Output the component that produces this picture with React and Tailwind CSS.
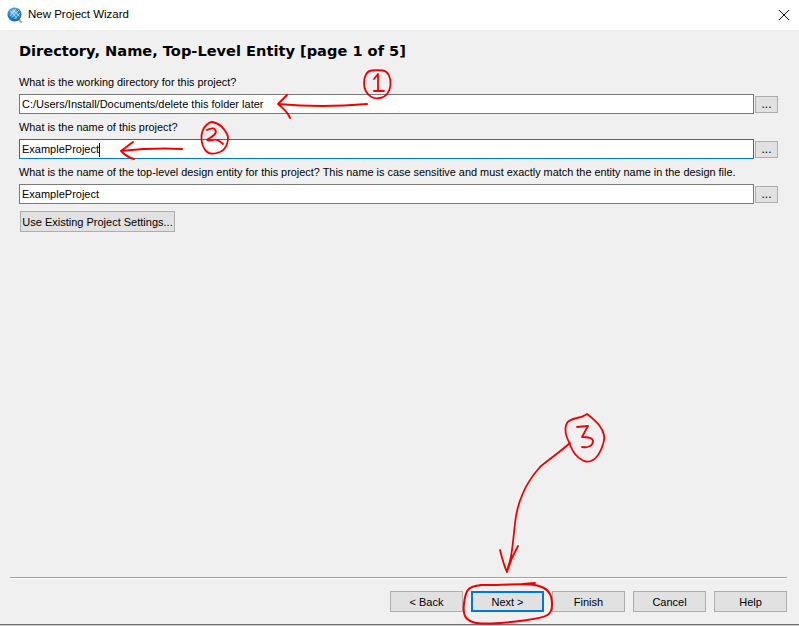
const labelCls = 'text-[10.9px] leading-[15px] text-black whitespace-nowrap'
const btnCls = 'bg-[#e1e1e1] border border-[#adadad] text-[11px] text-black flex items-center justify-center whitespace-nowrap'

// joins hand-drawn points with midpoint quadratics so the scribbles don't look angular
const smooth = (pts) => {
  let d = `M${pts[0][0]} ${pts[0][1]}`
  for (let i = 1; i < pts.length - 1; i++) {
    const mx = (pts[i][0] + pts[i + 1][0]) / 2
    const my = (pts[i][1] + pts[i + 1][1]) / 2
    d += ` Q${pts[i][0]} ${pts[i][1]} ${mx} ${my}`
  }
  const last = pts[pts.length - 1]
  return d + ` L${last[0]} ${last[1]}`
}

const ring1 = [[371,70.5],[378,70],[387,71],[391,80],[390,90],[385,97],[375,99],[368,95],[364,88],[364,78],[368,71],[373,70.5]]
const ring2 = [[212,122],[218,123],[225,130],[229,138],[225,150],[215,154],[207,153],[202,145],[201,135],[204,127],[210,122],[213,122]]
const ring3 = [[587,414],[595,420],[603,430],[605,440],[598,457],[588,463],[578,458],[572,450],[569,442],[565,433],[566,423],[572,419],[582,417],[587,414]]
const ringNext = [[482,585],[470,586],[465,595],[463,612],[467,620],[478,624],[505,623],[543,618],[552,612],[552,598],[548,590],[538,585],[523,584],[495,585],[480,585]]

function PathRow({ value, focused, caret }) {
  return (
    <div className="flex items-center gap-px h-5">
      <div className={`flex-1 h-5 bg-white border flex items-center pl-[2px] pt-px text-[11px] text-black whitespace-nowrap ${focused ? 'border-[#0078d7]' : 'border-[#7a7a7a]'}`}>
        {value}
        {caret && <span className="w-px h-[14px] bg-black" />}
      </div>
      <div className={`${btnCls} w-[23px] h-[17px] pb-[1px] text-[12px]`}>...</div>
    </div>
  )
}

function WizardIcon() {
  return (
    <svg width="16" height="16" viewBox="0 0 16 16" className="shrink-0">
      <defs>
        <radialGradient id="glb" cx="0.4" cy="0.3" r="0.8">
          <stop offset="0" stopColor="#8cc6ea" />
          <stop offset="0.5" stopColor="#1f84cc" />
          <stop offset="1" stopColor="#125a96" />
        </radialGradient>
      </defs>
      <path d="M11 12 L14.5 15.5" stroke="#9aa4aa" strokeWidth="2" fill="none" />
      <circle cx="7.5" cy="7.5" r="7" fill="url(#glb)" />
      <path d="M3 9 L9 1.5 M5 10.5 L12 3 M7.5 12 L13 6 M3.5 4 L10 11.5 M6 2.5 L12.5 9.5" stroke="#e4f1f8" strokeWidth="0.7" fill="none" />
    </svg>
  )
}

function Scribbles() {
  return (
    <svg width="799" height="626" viewBox="0 0 799 626" fill="none" stroke="#f00000" strokeWidth="1.8" strokeLinecap="round" strokeLinejoin="round" className="absolute left-0 top-0 pointer-events-none">
      {/* 1 */}
      <path d={smooth(ring1)} />
      <path d="M374 79 L378 74 L378 90 M374 91 L384 91" />
      <path d="M367 104 C345 106 310 107 278 104 M287 95 L278 104 C283 108 288 112 290 118" strokeWidth="2" />
      {/* 2 */}
      <path d={smooth(ring2)} />
      <path d={smooth([[207,130],[213,127],[217,132],[212,137],[206,140],[210,141],[217,139],[223,144]])} />
      <path d="M182 149 C160 148 140 149 121 151 M133 142 L121 151 C125 155 129 158 134 159" strokeWidth="2" />
      {/* 3 */}
      <path d={smooth(ring3)} />
      <path d="M577 427 L588 426 L582 437 C588 437 593 438 593 441 C593 446 588 448 582 447" />
      <path d="M570 443 C560 452 548 460 540 467 C532 476 526 486 523 493 C518 504 516 514 515 523 C514 533 513 543 512 550 C511 560 508 566 507 572 M500 550 C502 558 504 566 507 572 C510 562 514 553 518 546" />
      {/* ring round next */}
      <path d={smooth(ringNext)} strokeWidth="2" />
      <path d="M523 584 L535 583" />
    </svg>
  )
}

export default function App() {
  return (
    <div className="relative w-[799px] h-[626px] overflow-hidden bg-[#f0f0f0] flex flex-col font-['Liberation_Sans',sans-serif]">
      <div className="h-[30px] bg-white flex items-center pl-[7px] pr-[10px] shrink-0">
        <WizardIcon />
        <span className="ml-[5px] text-[11.5px] text-black">New Project Wizard</span>
        <svg width="10" height="10" viewBox="0 0 10 10" className="ml-auto" stroke="#111" strokeWidth="1" fill="none">
          <path d="M0 0 L10 10 M10 0 L0 10" />
        </svg>
      </div>

      <div className="flex-1 pl-[19px] pr-[21px] flex flex-col">
        <h1 className="mt-[11px] h-[20px] leading-[20px] text-[14.6px] font-bold text-black whitespace-nowrap font-['DejaVu_Sans',sans-serif]">
          Directory, Name, Top-Level Entity [page 1 of 5]
        </h1>
        <div className={`${labelCls} mt-[14px]`}>What is the working directory for this project?</div>
        <div className="mt-[4px]">
          <PathRow value="C:/Users/Install/Documents/delete this folder later" />
        </div>
        <div className={`${labelCls} mt-[6px]`}>What is the name of this project?</div>
        <div className="mt-[4px]">
          <PathRow value="ExampleProject" focused caret />
        </div>
        <div className={`${labelCls} mt-[6px]`}>What is the name of the top-level design entity for this project? This name is case sensitive and must exactly match the entity name in the design file.</div>
        <div className="mt-[4px]">
          <PathRow value="ExampleProject" />
        </div>
        <div className={`${btnCls} ml-px mt-[7px] w-[155px] h-[21px] pt-px`}>Use Existing Project Settings...</div>
      </div>

      <div className="ml-[10px] border-t border-t-[#a0a0a0] border-b border-b-white h-[2px] w-[777px] shrink-0" />
      <div className="flex justify-end gap-2 pt-[12px] pr-[12px] h-[45px] shrink-0">
        <div className={`${btnCls} w-[73px] h-[21px] pt-px`}>&lt; Back</div>
        <div className="bg-[#e1e1e1] border-2 border-[#0078d7] text-[11px] text-black flex items-center justify-center w-[73px] h-[21px] pt-px">Next &gt;</div>
        <div className={`${btnCls} w-[73px] h-[21px] pt-px`}>Finish</div>
        <div className={`${btnCls} w-[73px] h-[21px] pt-px`}>Cancel</div>
        <div className={`${btnCls} w-[73px] h-[21px] pt-px`}>Help</div>
      </div>
      <div className="h-px bg-[#707070] shrink-0" />
      <div className="h-px bg-[#c4c4c4] shrink-0" />
      <Scribbles />
    </div>
  )
}
